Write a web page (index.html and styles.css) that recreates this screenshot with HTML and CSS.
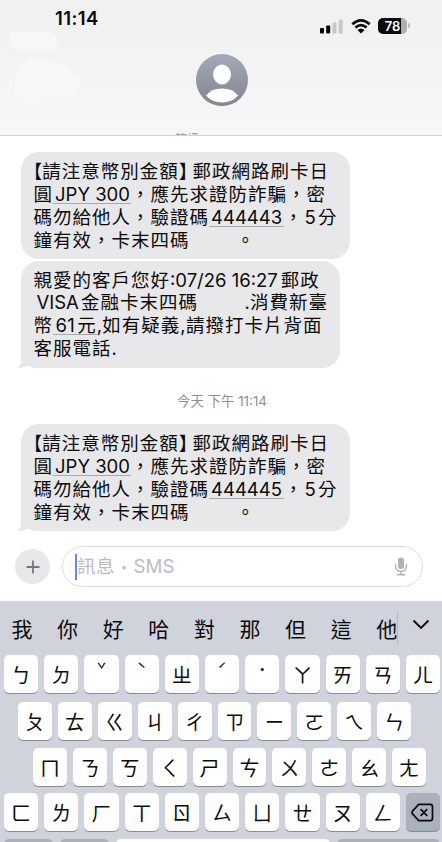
FILE: index.html
```html
<!DOCTYPE html>
<html lang="zh-Hant-TW">
<head>
  <meta charset="UTF-8" />
  <meta name="viewport" content="width=device-width, initial-scale=1" />
  <title>訊息</title>
  <link rel="stylesheet" href="styles.css">
</head>
<body>
  <div class="phone">
    <header class="header">
      <svg class="haze" viewBox="0 0 442 135">
        <path d="M12 32H48A9 9 0 0 1 48 51H20Q10 49 10 40ZM25 59Q41 54 53 63Q67 63 72 74Q82 79 81 88Q79 96 68 96H43Q40 109 30 109Q19 107 16 96Q10 75 25 59Z" />
      </svg>
      <div class="status">
        <span class="clock">11:14</span>
        <div class="indicators">
          <svg class="signal" width="23" height="15" viewBox="0 0 23 15">
            <rect x="0" y="9" width="4" height="5.5" rx="1" />
            <rect x="6.2" y="6.5" width="4" height="8" rx="1" />
            <rect class="off" x="12.5" y="3.5" width="4" height="11" rx="1" />
            <rect class="off" x="18.7" y="0.5" width="4" height="14" rx="1" />
          </svg>
          <svg class="wifi" width="20" height="15" viewBox="0 0 20 15">
            <path d="M1.3 5.3Q10-2.5 18.7 5.3M4.4 8.6Q10 3.7 15.6 8.6" />
            <path class="dot" d="M6.4 11Q10 8 13.6 11L10 14.6Z" />
          </svg>
          <div class="battery"><span>78</span></div>
        </div>
      </div>
      <svg class="avatar" width="52" height="52" viewBox="0 0 52 52">
        <defs>
          <linearGradient id="grey" x1="0" y1="0" x2="0" y2="1">
            <stop offset="0" stop-color="#a4a9b8" />
            <stop offset="1" stop-color="#83858f" />
          </linearGradient>
        </defs>
        <circle cx="26" cy="26" r="26" fill="url(#grey)" />
        <ellipse cx="26" cy="20.5" rx="9" ry="10" fill="#fff" />
        <path d="M10 41.500Q15 34.500 26 34.500T42 41.500Q36 48.500 26 48.500T10 41.500Z" fill="#fff" />
      </svg>
      <div class="peek">簡訊・SMS</div>
    </header>

    <main class="chat">
      <div class="bubble">
        <p><span class="open">【</span>請注意幣別金額<span class="close">】</span>郵政網路刷卡日</p>
        <p>圓<u class="jpy">JPY 300</u>，應先求證防詐騙，密</p>
        <p>碼勿給他人，驗證碼<u class="code">444443</u>，<span class="num">5</span>分</p>
        <p>鐘有效，卡末四碼<span class="gap"></span>。</p>
      </div>
      <div class="bubble narrow">
        <p>親愛的客戶您好<span class="date">:07/26 16:27</span>郵政</p>
        <p><span class="visa">VISA</span>金融卡末四碼<span class="gap"></span><span class="mark">.</span>消費新臺</p>
        <p>幣<u class="amount"><span class="num">61</span>元</u><span class="mark">,</span>如有疑義<span class="mark">,</span>請撥打卡片背面</p>
        <p>客服電話<span class="mark">.</span></p>
        <svg class="tip" width="22" height="16" viewBox="0 0 22 16"><path d="M4 0V8Q4 12 0 14.8Q6 15.5 11 12.800Q15 15 22 15L14 8V0Z" /></svg>
      </div>
      <div class="stamp">今天 下午 <span>11:14</span></div>
      <div class="bubble">
        <p><span class="open">【</span>請注意幣別金額<span class="close">】</span>郵政網路刷卡日</p>
        <p>圓<u class="jpy">JPY 300</u>，應先求證防詐騙，密</p>
        <p>碼勿給他人，驗證碼<u class="code">444445</u>，<span class="num">5</span>分</p>
        <p>鐘有效，卡末四碼<span class="gap"></span>。</p>
        <svg class="tip" width="22" height="16" viewBox="0 0 22 16"><path d="M4 0V8Q4 12 0 14.8Q6 15.5 11 12.800Q15 15 22 15L14 8V0Z" /></svg>
      </div>
    </main>

    <div class="compose">
      <div class="plus">
        <svg width="14" height="14" viewBox="0 0 14 14"><path d="M7 .5V13.5M.5 7H13.5" /></svg>
      </div>
      <div class="field">
        <i class="caret"></i>
        <span class="placeholder">訊息<b>•</b><em>SMS</em></span>
        <svg class="mic" width="14" height="19" viewBox="0 0 14 19">
          <rect x="4" y="0.5" width="6" height="11.5" rx="3" />
          <path d="M1.5 7V9A5.5 5.5 0 0 0 12.5 9V7M7 14.5V17.5M3 17.7H11" />
        </svg>
      </div>
    </div>

    <div class="keyboard">
      <div class="candidates">
        <span>我</span><span>你</span><span>好</span><span>哈</span><span>對</span><span>那</span><span>但</span><span>這</span><span>他</span>
        <div class="more">
          <svg width="18" height="11" viewBox="0 0 18 11"><path d="M1.5 1.5L9 9L16.5 1.5" /></svg>
        </div>
      </div>
      <div class="row first">
        <kbd>ㄅ</kbd><kbd>ㄉ</kbd><kbd class="tone">ˇ</kbd><kbd class="tone">ˋ</kbd><kbd>ㄓ</kbd><kbd class="tone">ˊ</kbd><kbd class="tone">˙</kbd><kbd>ㄚ</kbd><kbd>ㄞ</kbd><kbd>ㄢ</kbd><kbd>ㄦ</kbd>
      </div>
      <div class="row second">
        <kbd>ㄆ</kbd><kbd>ㄊ</kbd><kbd>ㄍ</kbd><kbd>ㄐ</kbd><kbd>ㄔ</kbd><kbd>ㄗ</kbd><kbd>ㄧ</kbd><kbd>ㄛ</kbd><kbd>ㄟ</kbd><kbd>ㄣ</kbd>
      </div>
      <div class="row third">
        <kbd>ㄇ</kbd><kbd>ㄋ</kbd><kbd>ㄎ</kbd><kbd>ㄑ</kbd><kbd>ㄕ</kbd><kbd>ㄘ</kbd><kbd>ㄨ</kbd><kbd>ㄜ</kbd><kbd>ㄠ</kbd><kbd>ㄤ</kbd>
      </div>
      <div class="row">
        <kbd>ㄈ</kbd><kbd>ㄌ</kbd><kbd>ㄏ</kbd><kbd>ㄒ</kbd><kbd>ㄖ</kbd><kbd>ㄙ</kbd><kbd>ㄩ</kbd><kbd>ㄝ</kbd><kbd>ㄡ</kbd><kbd>ㄥ</kbd>
        <kbd class="dark">
          <svg width="23" height="19" viewBox="0 0 24 20"><path d="M8 1.5H20Q22.5 1.5 22.5 4V16Q22.5 18.5 20 18.5H8L1.5 11.5Q.5 10 1.5 8.5ZM10 6.5L17 13.5M17 6.5L10 13.5" /></svg>
        </kbd>
      </div>
      <div class="row bottom">
        <kbd class="dark"></kbd><kbd class="dark"></kbd><kbd class="space"></kbd><kbd class="dark return"></kbd>
      </div>
    </div>
  </div>
</body>
</html>
```
FILE: styles.css
```css
* {
  box-sizing: border-box;
}

body {
  margin: 0;
  background: #fff;
  font-family: Inter, "Noto Sans CJK TC", sans-serif;
  color: #0b0b0c;
}

p {
  margin: 0;
}

.phone {
  width: 442px;
  height: 842px;
  overflow: hidden;
  display: flex;
  flex-direction: column;
}

/* header */
.header {
  position: relative;
  height: 136px;
  flex: none;
  background: linear-gradient(to bottom, #f0f0f1, #f3f3f4 45%, #f7f7f9);
  border-bottom: 1px solid #d4d4d6;
  display: flex;
  flex-direction: column;
  align-items: center;
}

.haze {
  position: absolute;
  left: 0;
  top: 0;
  width: 442px;
  height: 135px;
  fill: #f7f7f9;
}

.status {
  position: relative;
  width: 100%;
  height: 54px;
  padding: 8px 35px 0 55px;
  display: flex;
  justify-content: space-between;
  align-items: flex-start;
}

.clock {
  font-size: 18.5px;
  font-weight: 600;
  line-height: 21px;
  letter-spacing: 0.4px;
}

.indicators {
  display: flex;
  align-items: center;
  gap: 7.5px;
  margin-top: 10px;
}

.signal .off {
  fill: #c7c7c9;
}

.wifi {
  fill: none;
  stroke: #0b0b0c;
  stroke-width: 2.7;
}

.wifi .dot {
  fill: #0b0b0c;
  stroke: none;
}

.battery {
  position: relative;
  width: 29px;
  height: 16px;
  border-radius: 5px;
  background: linear-gradient(to right, #0b0b0c 79%, #aeaeb1 79%);
  color: #fff;
  font-size: 13px;
  font-weight: 600;
  line-height: 16px;
  text-align: center;
}

.battery::after {
  content: "";
  position: absolute;
  left: 30px;
  top: 5px;
  width: 2px;
  height: 5px;
  border-radius: 0 2px 2px 0;
  background: #b9b9bc;
}

.avatar {
  position: relative;
  margin-left: 2px;
}

.peek {
  height: 2px;
  margin-top: auto;
  padding-right: 30px;
  overflow: hidden;
  font-size: 12px;
  line-height: 14px;
  color: #8f8f93;
}

/* messages */
.chat {
  height: 410px;
  flex: none;
  padding: 16px 0 0 21px;
}

.bubble {
  position: relative;
  width: 329px;
  height: 107px;
  margin-bottom: 2px;
  padding: 8.4px 0 0 12.5px;
  border-radius: 18px;
  background: #e8e8ea;
  font-size: 18.5px;
  letter-spacing: 1px;
  white-space: nowrap;
}

.bubble p {
  height: 22.8px;
  line-height: 22.8px;
}

.narrow {
  width: 319px;
  padding-top: 7.5px;
}

.bubble u {
  display: inline-block;
  height: 21px;
  line-height: 22.8px;
  vertical-align: top;
  text-decoration: none;
  border-bottom: 1px solid #a9a9ad;
}

/* half-width lenticular brackets */
.open,
.close {
  font-family: "Noto Sans CJK TC", sans-serif;
  font-feature-settings: "halt";
  line-height: 20px;
  letter-spacing: 0;
}

.open {
  margin-left: -0.5px;
}

.close {
  margin-right: 4.5px;
}

.jpy {
  width: 78px;
  padding-left: 2px;
  letter-spacing: 0;
}

.code {
  width: 75px;
  padding-left: 2px;
  letter-spacing: 0;
}

.num {
  letter-spacing: 0.3px;
  margin: 0 2px 0 1px;
}

.amount .num {
  margin-left: 2.5px;
}

.gap {
  display: inline-block;
  width: 46.5px;
}

.date {
  letter-spacing: 0;
  margin-right: 3px;
}

.visa {
  letter-spacing: 0;
  margin: 0 2px 0 3px;
}

.mark {
  letter-spacing: 0.3px;
}

.tip {
  position: absolute;
  left: -4px;
  bottom: -1px;
  fill: #e8e8ea;
}

.stamp {
  height: 54px;
  padding: 22px 19px 0 0;
  text-align: center;
  font-size: 13.4px;
  line-height: 19px;
  color: #8f8f93;
}

/* input */
.compose {
  height: 55px;
  flex: none;
  display: flex;
  gap: 12px;
  padding: 0 19px 0 15px;
}

.plus {
  width: 35px;
  height: 35px;
  margin-top: 3px;
  border-radius: 50%;
  background: #e8e8eb;
  display: flex;
  align-items: center;
  justify-content: center;
}

.plus svg {
  stroke: #77777b;
  stroke-width: 1.8;
}

.field {
  flex: 1;
  height: 41px;
  border: 1px solid #dcdce0;
  border-radius: 21px;
  padding: 0 14px 0 12px;
  display: flex;
  align-items: center;
}

.caret {
  width: 2px;
  height: 26px;
  background: #6b86e0;
}

.placeholder {
  flex: 1;
  display: flex;
  align-items: center;
  font-size: 18.7px;
  line-height: 26px;
  color: #bcbcc0;
}

.placeholder b {
  font-size: 11px;
  margin: 0 7px;
}

.placeholder em {
  font-style: normal;
}

.mic {
  fill: #b0b0b6;
}

.mic path {
  fill: none;
  stroke: #b0b0b6;
  stroke-width: 1.4;
}

/* keyboard */
.keyboard {
  flex: 1;
  background: #d0d3db;
  font-family: "Noto Sans CJK TC", sans-serif;
}

.candidates {
  height: 54px;
  padding-left: 11.5px;
  display: flex;
  font-size: 21px;
  line-height: 55px;
}

.candidates span {
  width: 45.6px;
  flex: none;
}

.candidates span:nth-child(9) {
  width: 20.5px;
}

.more {
  height: 33px;
  margin-top: 10px;
  padding: 8px 0 0 14px;
  border-left: 1px solid #b5b7be;
  line-height: 0;
}

.more svg {
  fill: none;
  stroke: #0b0b0c;
  stroke-width: 1.9;
}

.row {
  display: flex;
  gap: 6px;
  height: 38px;
  margin: 0 2px 8px 4px;
}

.first {
  margin-bottom: 9px;
}

.second {
  margin: 0 31px 8px 18px;
}

.third {
  margin: 0 16px 7px 33px;
}

kbd {
  flex: 1;
  min-width: 0;
  height: 38px;
  border-radius: 5px;
  background: #fff;
  box-shadow: 0 1px 0 #898b91;
  font-family: inherit;
  font-size: 20px;
  line-height: 39px;
  text-align: center;
}

.tone {
  font-size: 16px;
  line-height: 29px;
}

.dark {
  background: #aab0bc;
  display: flex;
  align-items: center;
  justify-content: center;
}

.dark svg {
  fill: none;
  stroke: #0b0b0c;
  stroke-width: 1.8;
}

.bottom kbd {
  flex: none;
  width: 49px;
}

.bottom {
  gap: 7px;
}

.bottom .space {
  width: 214px;
}

.bottom .return {
  width: 103px;
}
```
